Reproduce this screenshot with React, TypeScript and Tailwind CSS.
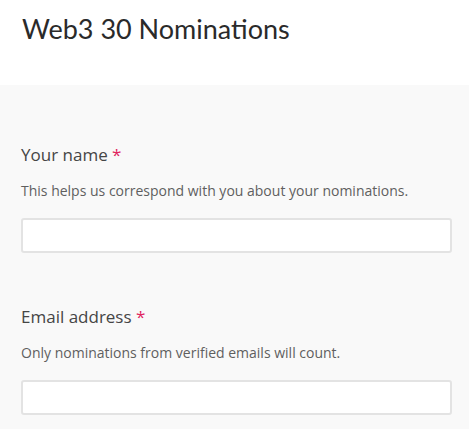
import React from 'react';

function Field({ label, help, type }: { label: string; help: string; type: string }) {
  return (
    <div className="flex flex-col">
      <label className="text-[17px] leading-6 text-[#454545]">
        {label} <span className="text-[#e0245e]">*</span>
      </label>
      <p className="mt-[14px] text-[14px] leading-5 text-[#5f5f5f]">{help}</p>
      <input
        type={type}
        className="mt-[17px] h-[35px] w-full rounded-[3px] border-2 border-[#e3e3e3] bg-white px-2 outline-none"
      />
    </div>
  );
}

export default function App() {
  return (
    <div className="min-h-screen bg-[#f9f9f9] font-['Open_Sans',sans-serif]">
      <header className="h-[85px] bg-white px-[22px] pt-[11px]">
        <h1 className="font-['Lato',sans-serif] text-[27px] leading-9 text-[#2a2a2a]">Web3 30 Nominations</h1>
      </header>
      <main className="flex flex-col gap-[52px] px-[21px] pt-[58px] pr-[17px]">
        <Field label="Your name" help="This helps us correspond with you about your nominations." type="text" />
        <Field label="Email address" help="Only nominations from verified emails will count." type="email" />
      </main>
    </div>
  );
}
